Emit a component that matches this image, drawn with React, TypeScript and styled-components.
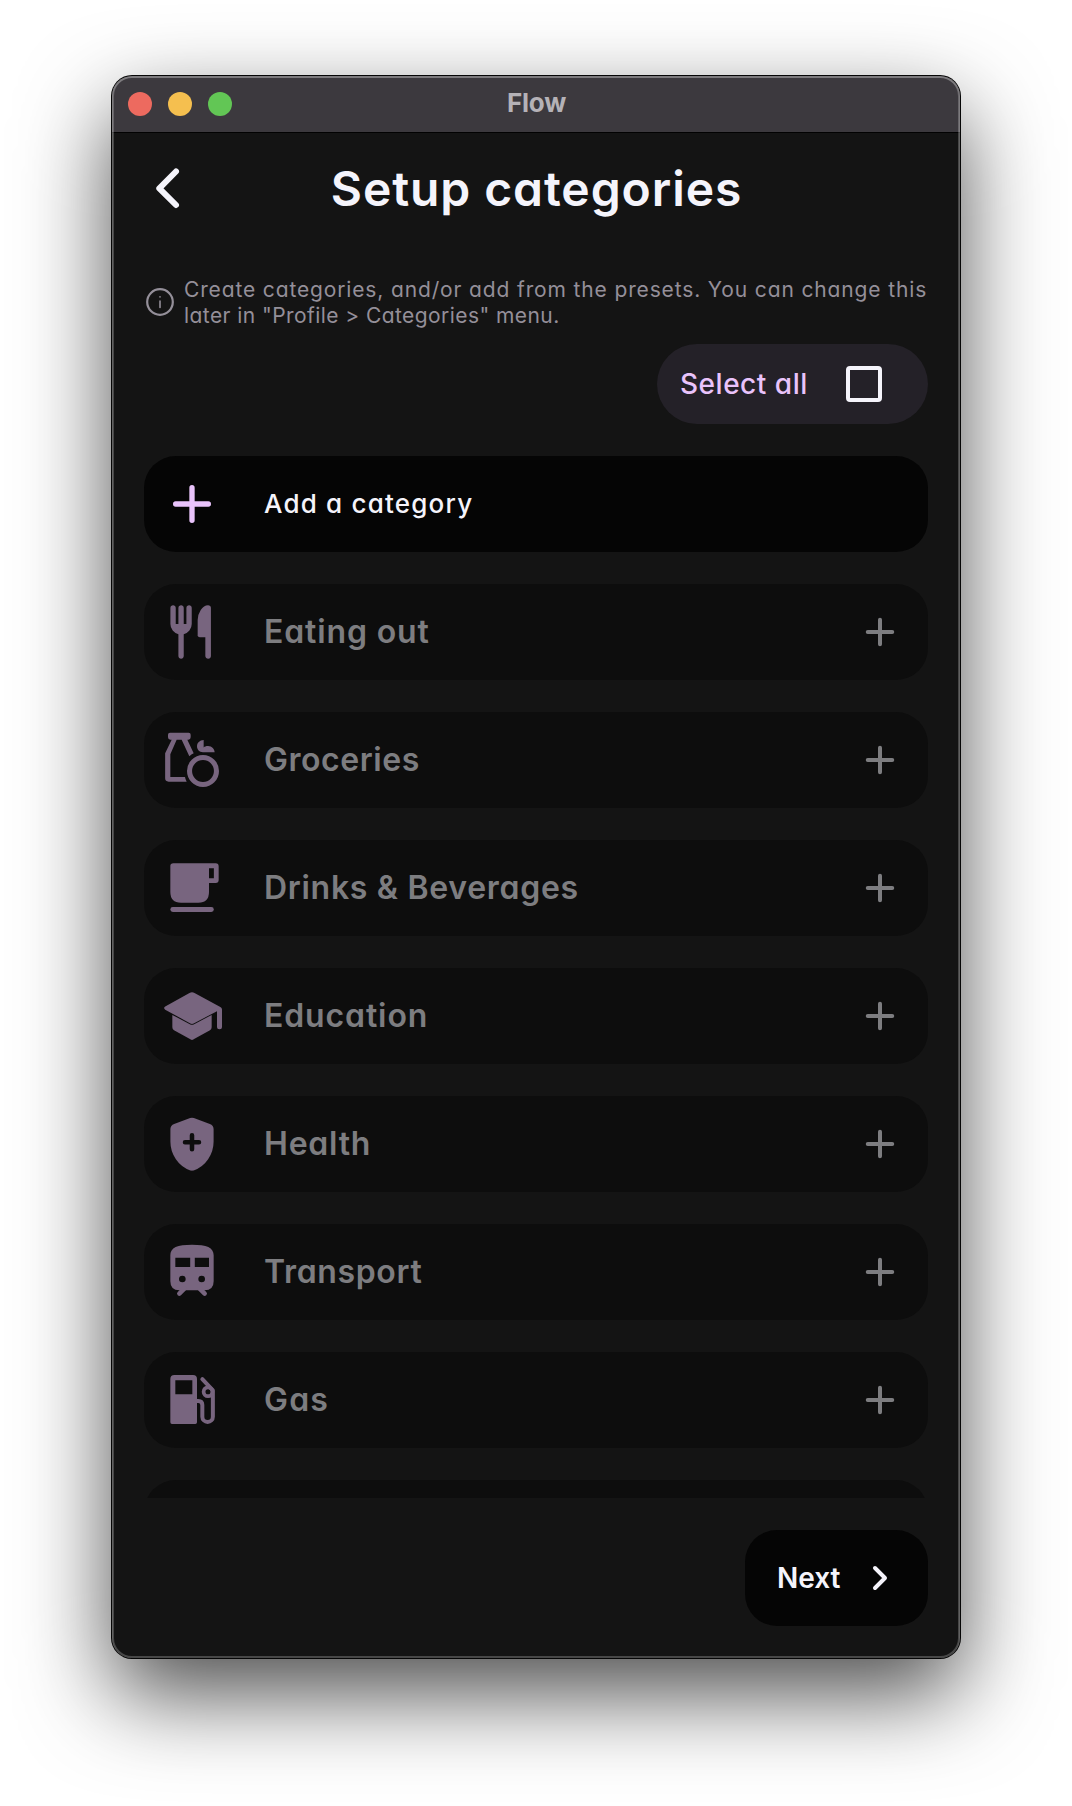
import React from "react";
import styled, { createGlobalStyle } from "styled-components";

const GlobalStyle = createGlobalStyle`
  * { box-sizing: border-box; }
  body { margin: 0; background: #ffffff; }
`;

const fontStack = `Inter, "Open Sans", sans-serif`;

const Desktop = styled.main`
  display: flex;
  justify-content: center;
  width: 1072px;
  height: 1806px;
  padding-top: 76px;
  overflow: hidden;
  font-family: ${fontStack};
  font-feature-settings: "cv11" 1;
`;

const Window = styled.div`
  position: relative;
  display: flex;
  flex-direction: column;
  width: 848px;
  height: 1582px;
  border-radius: 20px;
  background: #141414;
  box-shadow: 0 0 0 1px #060606, 0 36px 90px rgba(0, 0, 0, 0.7);

  &::after {
    content: "";
    position: absolute;
    inset: 0;
    border-radius: inherit;
    box-shadow: inset 0 0 0 2px rgba(255, 255, 255, 0.22),
      inset 0 1px 0 1px rgba(255, 255, 255, 0.15);
    pointer-events: none;
  }
`;

const TitleBar = styled.header`
  display: grid;
  grid-template-columns: 1fr auto 1fr;
  align-items: center;
  height: 57px;
  padding: 0 16px;
  flex: none;
  border-radius: 20px 20px 0 0;
  border-bottom: 1px solid #020202;
  background: #3c393e;
`;

const Lights = styled.div`
  display: flex;
  gap: 16px;
`;

const Light = styled.span<{ $color: string }>`
  width: 24px;
  height: 24px;
  border-radius: 50%;
  background: ${(p) => p.$color};
`;

const AppName = styled.span`
  padding: 0 0 2px 1px;
  color: #b5b2b7;
  font-size: 26px;
  font-weight: 700;
  letter-spacing: -0.2px;
  line-height: 32px;
`;

const Header = styled.div`
  display: grid;
  grid-template-columns: 48px 1fr 48px;
  align-items: center;
  height: 111px;
  padding: 0 32px;
  flex: none;
`;

const Title = styled.h1`
  margin: 0;
  padding: 1px 0 0 1px;
  text-align: center;
  white-space: nowrap;
  color: #f5f4fb;
  font-size: 48px;
  font-weight: 600;
  letter-spacing: 0.91px;
  line-height: 56px;
`;

const Body = styled.div`
  display: flex;
  flex-direction: column;
  flex: none;
  height: 1254px;
  padding: 32px 32px 0;
  overflow: hidden;
`;

const Hint = styled.div`
  display: flex;
  align-items: center;
  gap: 8px;
  height: 52px;
  flex: none;
`;

const HintText = styled.p`
  margin: 0;
  padding-top: 1px;
  color: #948f99;
  font-size: 21px;
  line-height: 26px;
  white-space: nowrap;
`;

const HintLine = styled.span<{ $spacing: number }>`
  display: block;
  letter-spacing: ${(p) => p.$spacing}px;
`;

const SelectAll = styled.button`
  display: flex;
  align-items: center;
  justify-content: space-between;
  align-self: flex-end;
  width: 271px;
  height: 80px;
  flex: none;
  margin: 16px 0 32px;
  padding: 0 46px 0 23px;
  border: 0;
  border-radius: 40px;
  background: #242128;
  color: #e9c3fb;
  font: 500 28px/40px ${fontStack};
  font-feature-settings: inherit;
  letter-spacing: 0.52px;
`;

const Box = styled.span`
  width: 36px;
  height: 36px;
  border: 4px solid #f5f4fb;
  border-radius: 4px;
`;

const List = styled.div`
  display: flex;
  flex-direction: column;
  gap: 32px;
`;

const Row = styled.div<{ $active?: boolean }>`
  display: flex;
  align-items: center;
  height: 96px;
  flex: none;
  padding: 0 24px 0 16px;
  border-radius: 32px;
  background: ${(p) => (p.$active ? "#050505" : "#0d0d0d")};
  color: ${(p) => (p.$active ? "#e9c3fb" : "#78657f")};
`;

const Label = styled.span<{ $active?: boolean; $spacing: number }>`
  flex: 1;
  margin-left: 40px;
  color: ${(p) => (p.$active ? "#f5f4fb" : "#7d7d80")};
  font-size: ${(p) => (p.$active ? 26 : 32)}px;
  font-weight: ${(p) => (p.$active ? 500 : 600)};
  letter-spacing: ${(p) => p.$spacing}px;
  line-height: 40px;
  white-space: nowrap;
`;

const Footer = styled.footer`
  display: flex;
  justify-content: flex-end;
  padding: 32px;
`;

const NextButton = styled.button`
  display: flex;
  align-items: center;
  justify-content: space-between;
  width: 183px;
  height: 96px;
  padding: 0 24px 0 32px;
  border: 0;
  border-radius: 32px;
  background: #050505;
  color: #f5f4fb;
  font: 600 28px/40px ${fontStack};
  font-feature-settings: inherit;
`;

const Glyph = styled.svg<{ $size: number; $color?: string }>`
  display: block;
  flex: none;
  width: ${(p) => p.$size}px;
  height: ${(p) => p.$size}px;
  color: ${(p) => p.$color ?? "inherit"};
  fill: currentColor;
`;

const stroke = {
  fill: "none",
  stroke: "currentColor",
  strokeLinecap: "round" as const,
  strokeLinejoin: "round" as const,
};

const Plus = ({ size, color }: { size: number; color?: string }) => (
  <Glyph $size={size} $color={color} viewBox="0 0 960 960">
    <path {...stroke} strokeWidth={80} d="M480 235V725M235 480H725" />
  </Glyph>
);

const icons: Record<string, React.ReactNode> = {
  eating: (
    <path
      transform="translate(-4 960)"
      d="M280-600v-240q0-17 11.5-28.5T320-880q17 0 28.5 11.5T360-840v240h40v-240q0-17 11.5-28.5T440-880q17 0 28.5 11.5T480-840v240q0 56-34.5 98T360-446v326q0 17-11.5 28.5T320-80q-17 0-28.5-11.5T280-120v-326q-51-14-85.5-56T160-600v-240q0-17 11.5-28.5T200-880q17 0 28.5 11.5T240-840v240h40ZM684-400h-80q-17 0-28.5-11.5T569-440v-220q0-77 46-148.5T724-880q20 0 32 11.5T768-840v720q0 17-11.5 28.5T726-80q-17 0-29.5-11.5T684-120v-280Z"
    />
  ),
  groceries: (
    <>
      <path d="M150 70H430Q460 70 460 100V140Q460 175 425 175H410L505 380Q470 395 440 425L325 175H250L155 395V735H375Q380 770 400 805H130Q77 805 77 755V380L175 175H155Q120 175 120 140V100Q120 70 150 70Z" />
      <circle cx="645" cy="645" r="202" {...stroke} strokeWidth={76} />
      <path d="M655 180c-60 5-100 40-100 95 0 50 35 88 90 90h175c0-45-40-95-100-95-30 0-52 8-65 22z" />
    </>
  ),
  drinks: (
    <>
      <path
        fillRule="evenodd"
        d="M200 108H835Q880 108 880 153V360Q880 405 835 405H735V540Q735 700 575 700H315Q155 700 155 540V148Q155 108 200 108ZM735 182V332H808V182Z"
      />
      <rect x="155" y="765" width="652" height="75" rx="37" />
    </>
  ),
  education: (
    <>
      <path d="M442 135Q480 113 518 135L905 344Q930 358 930 382V642a37 37 0 0 1-75 0V408L505 592Q480 605 455 592L78 385Q45 360 78 337Z" />
      <path d="M185 464L455 606Q480 619 505 606L775 464V650Q775 680 750 694L518 822Q480 855 442 822L210 694Q185 680 185 650Z" />
    </>
  ),
  health: (
    <>
      <path
        transform="translate(0 960)"
        d="M480-80q-7 0-13-1t-12-3q-135-45-217-166.5T156-512v-193q0-25 14.5-45t41.5-29l240-90q14-5 28-5t28 5l240 90q27 9 41.5 29t14.5 45v193q0 140-82 261.5T505-84q-6 2-12 3t-13 1Z"
      />
      <path {...stroke} stroke="#0d0d0d" strokeWidth={68} d="M480 350V560M375 455H585" />
    </>
  ),
  transport: (
    <>
      <path
        fillRule="evenodd"
        d="M155 230C155 110 260 70 480 70S805 110 805 230V620Q805 755 670 755H290Q155 755 155 620ZM230 265V405H453V265ZM522 265V405H735V265ZM385 585a50 50 0 1 0-100 0a50 50 0 1 0 100 0ZM675 585a50 50 0 1 0-100 0a50 50 0 1 0 100 0Z"
      />
      <path {...stroke} strokeWidth={68} d="M290 805L365 730M670 805L595 730" />
    </>
  ),
  gas: (
    <>
      <path
        fillRule="evenodd"
        d="M215 105H495Q555 105 555 165V815Q555 840 530 840H180Q155 840 155 815V165Q155 105 215 105ZM230 182V395H485V182Z"
      />
      <path
        {...stroke}
        strokeWidth={60}
        d="M550 495H575Q635 495 635 555V730a79 79 0 0 0 158 0V335L635 168"
      />
      <circle cx="720" cy="357" r="66" {...stroke} strokeWidth={56} />
    </>
  ),
};

const categories = [
  { icon: "eating", name: "Eating out", spacing: 0.86 },
  { icon: "groceries", name: "Groceries", spacing: 0.55 },
  { icon: "drinks", name: "Drinks & Beverages", spacing: 0.7 },
  { icon: "education", name: "Education", spacing: 0.88 },
  { icon: "health", name: "Health", spacing: 0.78 },
  { icon: "transport", name: "Transport", spacing: 0.66 },
  { icon: "gas", name: "Gas", spacing: 1.2 },
];

export default function App() {
  return (
    <Desktop>
      <GlobalStyle />
      <Window>
        <TitleBar>
          <Lights>
            <Light $color="#ed6a5f" />
            <Light $color="#f5bf4f" />
            <Light $color="#62c655" />
          </Lights>
          <AppName>Flow</AppName>
        </TitleBar>
        <Header>
          <Glyph $size={48} $color="#f5f4fb" viewBox="0 0 48 48">
            <path {...stroke} strokeWidth={6} d="M32 6.5L15.3 23.3L32 40" />
          </Glyph>
          <Title>Setup categories</Title>
        </Header>
        <Body>
          <Hint>
            <Glyph $size={32} $color="#948f99" viewBox="0 0 32 32">
              <circle cx="16" cy="16" r="12.8" {...stroke} strokeWidth={2.2} />
              <path {...stroke} strokeWidth={1.6} d="M16 15V21.5M16 10.8V11" />
            </Glyph>
            <HintText>
              <HintLine $spacing={0.86}>
                Create categories, and/or add from the presets. You can change this
              </HintLine>
              <HintLine $spacing={0.43}>
                later in "Profile &gt; Categories" menu.
              </HintLine>
            </HintText>
          </Hint>
          <SelectAll>
            Select all
            <Box />
          </SelectAll>
          <List>
            <Row $active>
              <Plus size={64} />
              <Label $active $spacing={1.2}>
                Add a category
              </Label>
            </Row>
            {categories.map((c) => (
              <Row key={c.name}>
                <Glyph $size={64} viewBox="0 0 960 960">
                  {icons[c.icon]}
                </Glyph>
                <Label $spacing={c.spacing}>{c.name}</Label>
                <Plus size={48} color="#7d7d80" />
              </Row>
            ))}
            <Row />
          </List>
        </Body>
        <Footer>
          <NextButton>
            Next
            <Glyph $size={48} viewBox="0 0 48 48">
              <path {...stroke} strokeWidth={4} d="M19 14L29 24L19 34" />
            </Glyph>
          </NextButton>
        </Footer>
      </Window>
    </Desktop>
  );
}
